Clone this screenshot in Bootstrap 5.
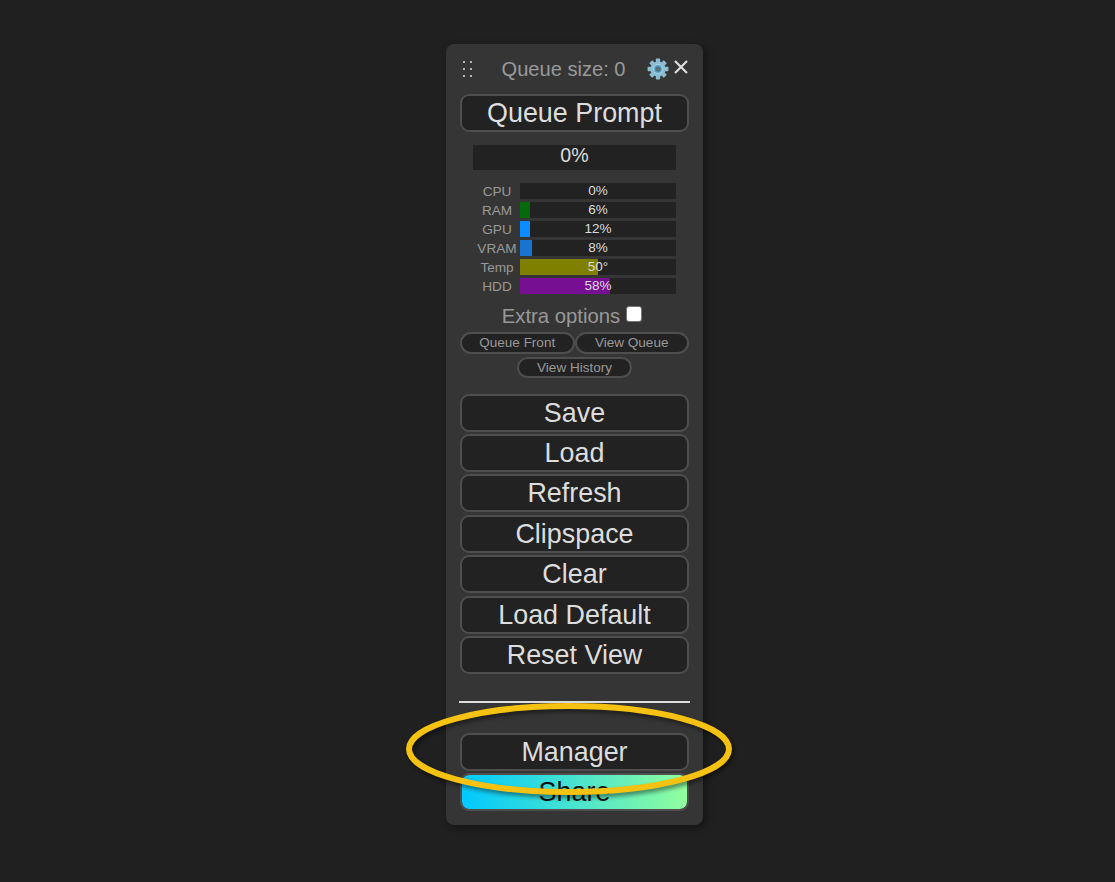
<!DOCTYPE html>
<html lang="en">
<head>
    <meta charset="UTF-8">
    <title>Queue</title>
    <link href="https://cdn.jsdelivr.net/npm/bootstrap@5.3.0/dist/css/bootstrap.min.css" rel="stylesheet">
    <style>
        html, body { height: 100%; }
        body { background: #202020; font-family: "Liberation Sans", Arial, sans-serif; overflow: hidden; }
        .stage { width: 1115px; height: 882px; padding-top: 44px; }
        .panel-box { width: 257px; height: 781px; margin-left: 446px; padding: 0 14px; background: #353535; border-radius: 8px; box-shadow: 3px 3px 8px rgba(0,0,0,.4); }
        .head-row { height: 50px; padding-bottom: 1px; color: #999; font-size: 20.1px; line-height: 24px; }
        .grip { width: 12px; height: 18px; margin-left: 2px; flex: none; }
        .size-label { width: 153px; margin-left: 13px; text-align: center; white-space: nowrap; }
        .gear { width: 22px; height: 22px; margin-left: 6.5px; margin-top: 1px; }
        .close-x { width: 16px; height: 16px; margin-left: 4px; margin-top: -4px; }
        .big-btn { display: block; width: 100%; height: 38px; padding: 0; margin-bottom: 2.4px; background: #222; color: #ddd; border: 2px solid #4e4e4e; border-radius: 9px; font-size: 26.9px; line-height: 32px; text-align: center; }
        .share-btn { background: linear-gradient(90deg, #00c9ff, #92fe9d) padding-box; color: #111; }
        .prog-main { width: 203px; height: 25px; margin: 13px auto 13px; background: #222; color: #ddd; font-size: 19.6px; line-height: 20px; text-align: center; }
        .stat-row { height: 18.95px; color: #999; font-size: 13.6px; line-height: 17px; }
        .stat-name { width: 60px; padding-left: 14px; text-align: center; white-space: nowrap; }
        .stat-bar { position: relative; width: 156px; height: 16px; background: #222; overflow: hidden; }
        .stat-fill { height: 100%; }
        .stat-val { position: absolute; inset: 0; text-align: center; color: #ddd; font-size: 13.5px; line-height: 15px; }
        .extra-row { margin-top: 8px; height: 27px; padding-right: 5px; color: #999; font-size: 20.3px; line-height: 22px; }
        .extra-check { appearance: none; width: 16px; height: 16px; margin: 1.3px 0 0 6px; background: #fff; border: 1px solid #767676; border-radius: 3px; }
        .small-btn { height: 22px; padding: 0; background: #222; color: #999; border: 2px solid #4e4e4e; border-radius: 11px; font-size: 13.5px; line-height: 18px; text-align: center; }
        .small-half { width: 114.5px; }
        .small-hist { width: 115px; height: 21px; margin: 3px auto 16px; display: block; line-height: 17px; }
        .rule-line { height: 2px; width: 231px; margin: 27px -1px 30px; background: #ddd; }
        .ring { position: absolute; left: 400px; top: 695px; width: 340px; height: 110px; filter: drop-shadow(2px 3px 2px rgba(0,0,0,.45)); }
    </style>
</head>
<body>
    <div class="stage position-relative">
        <div class="panel-box">
            <div class="head-row d-flex align-items-center">
                <svg class="grip" viewBox="0 0 12 18">
                    <g fill="#b4b4b4">
                        <rect x="1" y="1" width="2" height="2"/><rect x="8" y="1" width="2" height="2"/>
                        <rect x="1" y="8" width="2" height="2"/><rect x="8" y="8" width="2" height="2"/>
                        <rect x="1" y="15" width="2" height="2"/><rect x="8" y="15" width="2" height="2"/>
                    </g>
                </svg>
                <div class="size-label">Queue size: 0</div>
                <svg class="gear" viewBox="0 0 22 22">
                    <g fill="#8dbdd2">
                        <rect x="8.8" y="0.6" width="4.4" height="20.8" rx="0.8"/>
                        <rect x="8.8" y="0.6" width="4.4" height="20.8" rx="0.8" transform="rotate(45 11 11)"/>
                        <rect x="8.8" y="0.6" width="4.4" height="20.8" rx="0.8" transform="rotate(90 11 11)"/>
                        <rect x="8.8" y="0.6" width="4.4" height="20.8" rx="0.8" transform="rotate(135 11 11)"/>
                        <circle cx="11" cy="11" r="7.6"/>
                    </g>
                    <circle cx="11" cy="11" r="5" fill="#a9d3e3"/>
                    <circle cx="11" cy="11" r="3.9" fill="#4fa0c8"/>
                    <circle cx="11" cy="11" r="2.5" fill="#5d6d76"/>
                </svg>
                <svg class="close-x" viewBox="0 0 16 16"><path d="M2 2 14 14M14 2 2 14" stroke="#ddd" stroke-width="2.2" fill="none"/></svg>
            </div>
            <button class="big-btn" type="button">Queue Prompt</button>
            <div class="prog-main">0%</div>

            <div class="stat-row d-flex"><div class="stat-name">CPU</div><div class="stat-bar"><div class="stat-fill" style="width:0%"></div><div class="stat-val">0%</div></div></div>
            <div class="stat-row d-flex"><div class="stat-name">RAM</div><div class="stat-bar"><div class="stat-fill" style="width:6.4%;background:#056a0c"></div><div class="stat-val">6%</div></div></div>
            <div class="stat-row d-flex"><div class="stat-name">GPU</div><div class="stat-bar"><div class="stat-fill" style="width:6.4%;background:#0a8cff"></div><div class="stat-val">12%</div></div></div>
            <div class="stat-row d-flex"><div class="stat-name">VRAM</div><div class="stat-bar"><div class="stat-fill" style="width:7.7%;background:#1a73d0"></div><div class="stat-val">8%</div></div></div>
            <div class="stat-row d-flex"><div class="stat-name">Temp</div><div class="stat-bar"><div class="stat-fill" style="width:50%;background:#808000"></div><div class="stat-val">50°</div></div></div>
            <div class="stat-row d-flex"><div class="stat-name">HDD</div><div class="stat-bar"><div class="stat-fill" style="width:58%;background:#770f92"></div><div class="stat-val">58%</div></div></div>

            <div class="extra-row d-flex justify-content-center align-items-start"><span>Extra options</span><input class="extra-check" type="checkbox"></div>
            <div class="d-flex">
                <button class="small-btn small-half" type="button">Queue Front</button>
                <button class="small-btn small-half" type="button">View Queue</button>
            </div>
            <button class="small-btn small-hist" type="button">View History</button>

            <button class="big-btn" type="button">Save</button>
            <button class="big-btn" type="button">Load</button>
            <button class="big-btn" type="button">Refresh</button>
            <button class="big-btn" type="button">Clipspace</button>
            <button class="big-btn" type="button">Clear</button>
            <button class="big-btn" type="button">Load Default</button>
            <button class="big-btn" type="button">Reset View</button>
            <div class="rule-line"></div>
            <button class="big-btn" type="button">Manager</button>
            <button class="big-btn share-btn" type="button">Share</button>
        </div>
        <svg class="ring" viewBox="0 0 340 110">
            <ellipse cx="169" cy="54" rx="160" ry="43" fill="none" stroke="#f5c211" stroke-width="6"/>
        </svg>
    </div>
    <script src="https://cdn.jsdelivr.net/npm/bootstrap@5.3.0/dist/js/bootstrap.bundle.min.js"></script>
</body>
</html>
